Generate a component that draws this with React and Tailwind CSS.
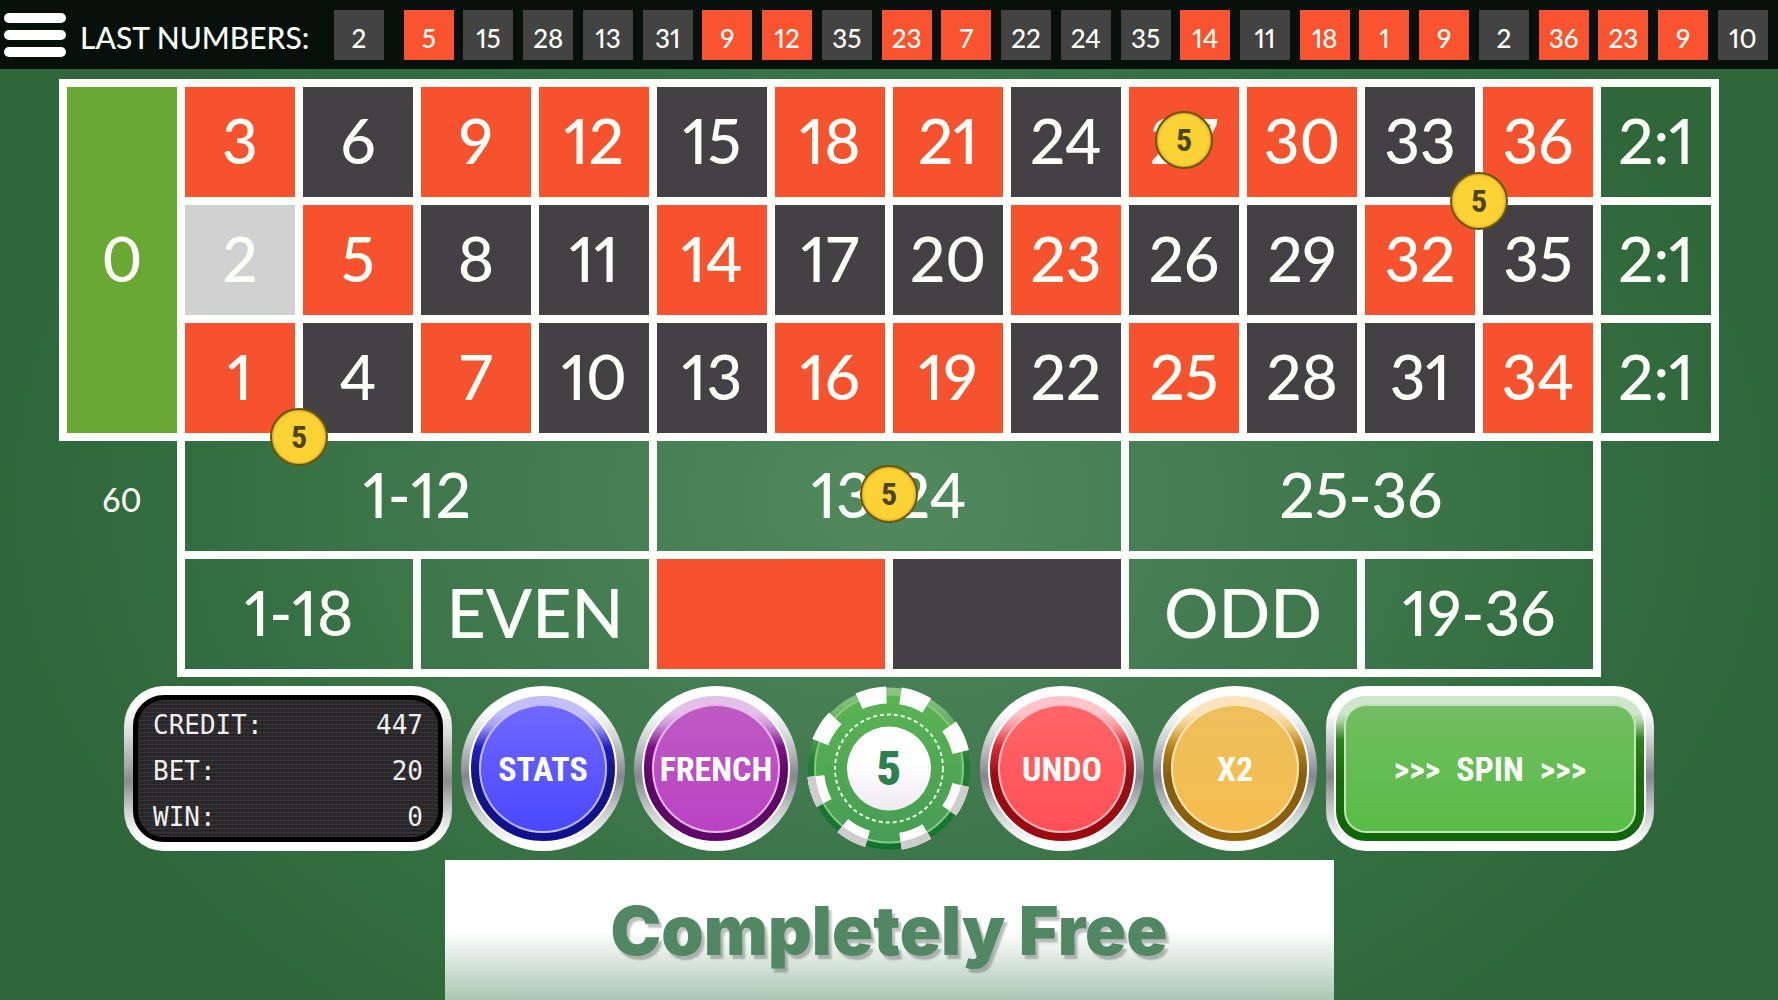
import React from 'react';
import { clsx } from 'clsx';

const RED = [1, 3, 5, 7, 9, 12, 14, 16, 18, 19, 21, 23, 25, 27, 30, 32, 34, 36];

const lastNumbers = [5, 15, 28, 13, 31, 9, 12, 35, 23, 7, 22, 24, 35, 14, 11, 18, 1, 9, 2, 36, 23, 9, 10];

const rows = [3, 2, 1].map((start) => Array.from({ length: 12 }, (_, i) => start + i * 3));

const chips = { 27: 'center', 33: 'corner', 1: 'corner', '13-24': 'center' };

const notches = [20, 66, 114, 160, 208, 253, 302, 347];

function LastNumber({ value }) {
  return (
    <li
      className={clsx(
        'flex h-[50px] w-[50px] shrink-0 items-center justify-center pt-1.5 text-[26px] leading-none',
        RED.includes(value) ? 'bg-[#f9532f]' : 'bg-[#434343]'
      )}
    >
      {value}
    </li>
  );
}

function BetChip({ place }) {
  return (
    <span
      className={clsx(
        'absolute z-10 flex h-[58px] w-[58px] items-center justify-center rounded-full border-2 border-[#6b5410] bg-[#fbd335] font-["Liberation_Sans_Narrow","Roboto_Condensed","Liberation_Sans",sans-serif] text-[32px] font-bold leading-none text-[#4f4318] shadow-[inset_0_0_3px_#a88413]',
        place === 'corner' && '-bottom-[33px] -right-[33px]'
      )}
    >
      5
    </span>
  );
}

function Cell({ label, className }) {
  const place = chips[label];
  return (
    <button
      type="button"
      className={clsx(
        'relative flex items-center justify-center whitespace-nowrap pb-1 leading-none outline-8 outline-[#fdfffb]',
        className
      )}
    >
      {label}
      {place && <BetChip place={place} />}
    </button>
  );
}

function Table() {
  return (
    <main className="grid auto-rows-[110px] grid-cols-14 gap-2 px-[67px] pt-[18px] text-[62px]">
      <Cell label="0" className="row-span-3 bg-[#69a832]" />
      {rows.map((row) => (
        <React.Fragment key={row[0]}>
          {row.map((n) => (
            <Cell
              key={n}
              label={n}
              className={n === 2 ? 'bg-[#d1d1d1]' : RED.includes(n) ? 'bg-[#f6522e]' : 'bg-[#434143]'}
            />
          ))}
          <Cell label="2:1" />
        </React.Fragment>
      ))}

      <p className="flex items-center justify-center pt-2 text-[32px] leading-none">60</p>
      <Cell label="1-12" className="col-span-4" />
      <Cell label="13-24" className="col-span-4" />
      <Cell label="25-36" className="col-span-4" />

      <Cell label="1-18" className="col-span-2 col-start-2" />
      <Cell label="EVEN" className="col-span-2 text-[68px]" />
      <button type="button" aria-label="Red" className="col-span-2 bg-[#f6522e] outline-8 outline-[#fdfffb]" />
      <button type="button" aria-label="Black" className="col-span-2 bg-[#434143] outline-8 outline-[#fdfffb]" />
      <Cell label="ODD" className="col-span-2 text-[68px]" />
      <Cell label="19-36" className="col-span-2" />
    </main>
  );
}

function Display() {
  const lines = [
    ['CREDIT:', '447'],
    ['BET:', '20'],
    ['WIN:', '0'],
  ];
  return (
    <div className="h-[165px] w-[328px] rounded-[40px] bg-[linear-gradient(#ffffff_12%,#d8d8d8_30%,#8c8c8c_58%,#d8d8d8_78%,#ffffff_92%)] p-[9px]">
      <dl className="flex h-full flex-col justify-center rounded-[31px] border-[5px] border-black bg-[#2b292b] bg-[repeating-linear-gradient(#ffffff10_0px_1px,transparent_1px_4px),repeating-linear-gradient(90deg,#00000030_0px_1px,transparent_1px_4px)] px-[15px] pt-1 font-['DejaVu_Sans_Mono',monospace] text-[26px] leading-[46px] text-[#f0f0f0]">
        {lines.map(([label, value]) => (
          <div key={label} className="flex justify-between">
            <dt>{label}</dt>
            <dd>{value}</dd>
          </div>
        ))}
      </dl>
    </div>
  );
}

function GlossButton({ children, ring, face, wide }) {
  return (
    <button
      type="button"
      className={clsx(
        'h-[165px] bg-[linear-gradient(#ffffff_15%,#d5d8d8_30%,#85858f_55%,#c5cac8_75%,#ffffff_95%)] p-2',
        wide ? 'w-[328px] rounded-[40px]' : 'w-[164px] rounded-full'
      )}
    >
      <span
        className={clsx('block h-full border-2 border-white p-2', wide ? 'rounded-[32px]' : 'rounded-full', ring)}
      >
        <span
          className={clsx(
            'flex h-full items-center justify-center gap-4 whitespace-pre border-2 border-white/60 font-["Liberation_Sans_Narrow","Roboto_Condensed","Liberation_Sans",sans-serif] text-[34px] font-bold leading-none',
            wide ? 'rounded-[22px]' : 'rounded-full',
            face
          )}
        >
          {children}
        </span>
      </span>
    </button>
  );
}

// ring slice between two radii, centred on an angle measured clockwise from the top
function slice(angle, inner, outer, half = 11) {
  const point = (deg, r) => {
    const a = (deg * Math.PI) / 180;
    return `${(82 + r * Math.sin(a)).toFixed(1)} ${(82 - r * Math.cos(a)).toFixed(1)}`;
  };
  return `M${point(angle - half, inner)} L${point(angle - half, outer)} A${outer} ${outer} 0 0 1 ${point(angle + half, outer)} L${point(angle + half, inner)} A${inner} ${inner} 0 0 0 ${point(angle - half, inner)}Z`;
}

function CasinoChip() {
  return (
    <button type="button" className="grid h-[165px] w-[164px] place-items-center">
      <svg viewBox="0 0 164 164" className="col-start-1 row-start-1 h-full w-full" aria-hidden="true">
        <defs>
          <linearGradient id="rim" x2="0" y2="1">
            <stop offset="0" stopColor="#8fc586" />
            <stop offset=".25" stopColor="#62aa60" />
            <stop offset=".45" stopColor="#237c35" />
            <stop offset="1" stopColor="#127231" />
          </linearGradient>
          <linearGradient id="body" x2="0" y2="1">
            <stop offset="0" stopColor="#5bb452" />
            <stop offset="1" stopColor="#459c55" />
          </linearGradient>
          <linearGradient id="hub" x2="0" y2="1">
            <stop offset=".4" stopColor="#ffffff" />
            <stop offset="1" stopColor="#eeeaf2" />
          </linearGradient>
        </defs>
        <circle cx="82" cy="82" r="81" fill="url(#rim)" />
        <circle cx="82" cy="82" r="74" fill="url(#body)" stroke="#85ca80" strokeWidth="2" />
        {notches.map((angle) => (
          <g key={angle}>
            <path d={slice(angle, 65, 82)} fill="#fdfdfd" />
            {angle > 90 && angle < 270 && <path d={slice(angle, 74, 82)} fill="#cdcdcd" />}
          </g>
        ))}
        <circle cx="82" cy="82" r="54" fill="none" stroke="#e8ffe6" strokeWidth="2" strokeDasharray="4 3" />
        <circle cx="82" cy="82" r="42" fill="url(#hub)" />
      </svg>
      <span className="col-start-1 row-start-1 font-['Liberation_Sans_Narrow','Roboto_Condensed','Liberation_Sans',sans-serif] text-[48px] font-black leading-none text-[#2f8050]">
        5
      </span>
    </button>
  );
}

function Controls() {
  return (
    <section className="mt-[17px] flex justify-center gap-[9px]">
      <Display />
      <GlossButton
        ring="bg-[linear-gradient(#c3bdf8_12%,#a8a0fb_20%,#2020c0_35%,#15157f_55%,#10108e)]"
        face="bg-[linear-gradient(#7068ff,#4a48ff)]"
      >
        STATS
      </GlossButton>
      <GlossButton
        ring="bg-[linear-gradient(#e4bfe7_12%,#cf92d8_20%,#7c1288_35%,#5c0764_55%,#5f0868)]"
        face="bg-[linear-gradient(#bd5ac2,#bb43c4)]"
      >
        FRENCH
      </GlossButton>
      <CasinoChip />
      <GlossButton
        ring="bg-[linear-gradient(#ffc5ca_12%,#ff9ba0_20%,#d52c30_35%,#930f14_55%,#9b0b10)]"
        face="bg-[linear-gradient(#ff6667,#ff4f57)]"
      >
        UNDO
      </GlossButton>
      <GlossButton
        ring="bg-[linear-gradient(#fbe4bd_12%,#f3cf85_20%,#b9811a_35%,#855d11_55%,#8f6107)]"
        face="bg-[linear-gradient(#edbf5b,#f6bd4e)]"
      >
        X2
      </GlossButton>
      <GlossButton
        wide
        ring="bg-[linear-gradient(#cfe5cc_12%,#b5d9ad_16%,#2f8220_30%,#1d6a10_55%,#0f650a)]"
        face="bg-[linear-gradient(#72bd61,#58bd46)]"
      >
        <span>&gt;&gt;&gt;</span>
        <span>SPIN</span>
        <span>&gt;&gt;&gt;</span>
      </GlossButton>
    </section>
  );
}

export default function App() {
  return (
    <div className="flex min-h-screen flex-col bg-[#2f673b] bg-[radial-gradient(ellipse_50%_65%_at_50%_50%,#52895f_0%,#407a4e_45%,#326d3f_80%,#2f673b_100%)] font-['Lato_Medium','Lato_Semibold','Lato','Liberation_Sans',sans-serif] proportional-nums text-[#fbfff8]">
      <header className="flex items-center bg-[#07100a] pt-[10px] pl-1 pr-[10px] pb-[9px]">
        <button type="button" aria-label="Menu" className="flex w-[62px] shrink-0 flex-col gap-[7px]">
          <span className="h-[10px] rounded-full bg-white" />
          <span className="h-[10px] rounded-full bg-white" />
          <span className="h-[10px] rounded-full bg-white" />
        </button>
        <h2 className="ml-[14px] w-[254px] shrink-0 whitespace-nowrap pt-1 text-[30px] leading-none">LAST NUMBERS:</h2>
        <ul className="flex min-w-0 flex-1 justify-between overflow-hidden">
          <li className="mr-[10px] flex h-[50px] w-[50px] shrink-0 items-center justify-center bg-[#434343] pt-1.5 text-[26px] leading-none">
            2
          </li>
          {lastNumbers.map((n, i) => (
            <LastNumber key={i} value={n} />
          ))}
        </ul>
      </header>

      <Table />
      <Controls />

      <footer className="mx-auto mt-[9px] flex w-1/2 flex-1 items-center justify-center bg-[linear-gradient(#ffffff_50%,#e3ebe4_68%,#a9c7b2_100%)]">
        <h1 className="whitespace-nowrap font-['Inter','Liberation_Sans',sans-serif] text-[68px] font-black leading-none text-[#518763] [text-shadow:3px_4px_2px_#00000040]">
          Completely Free
        </h1>
      </footer>
    </div>
  );
}
